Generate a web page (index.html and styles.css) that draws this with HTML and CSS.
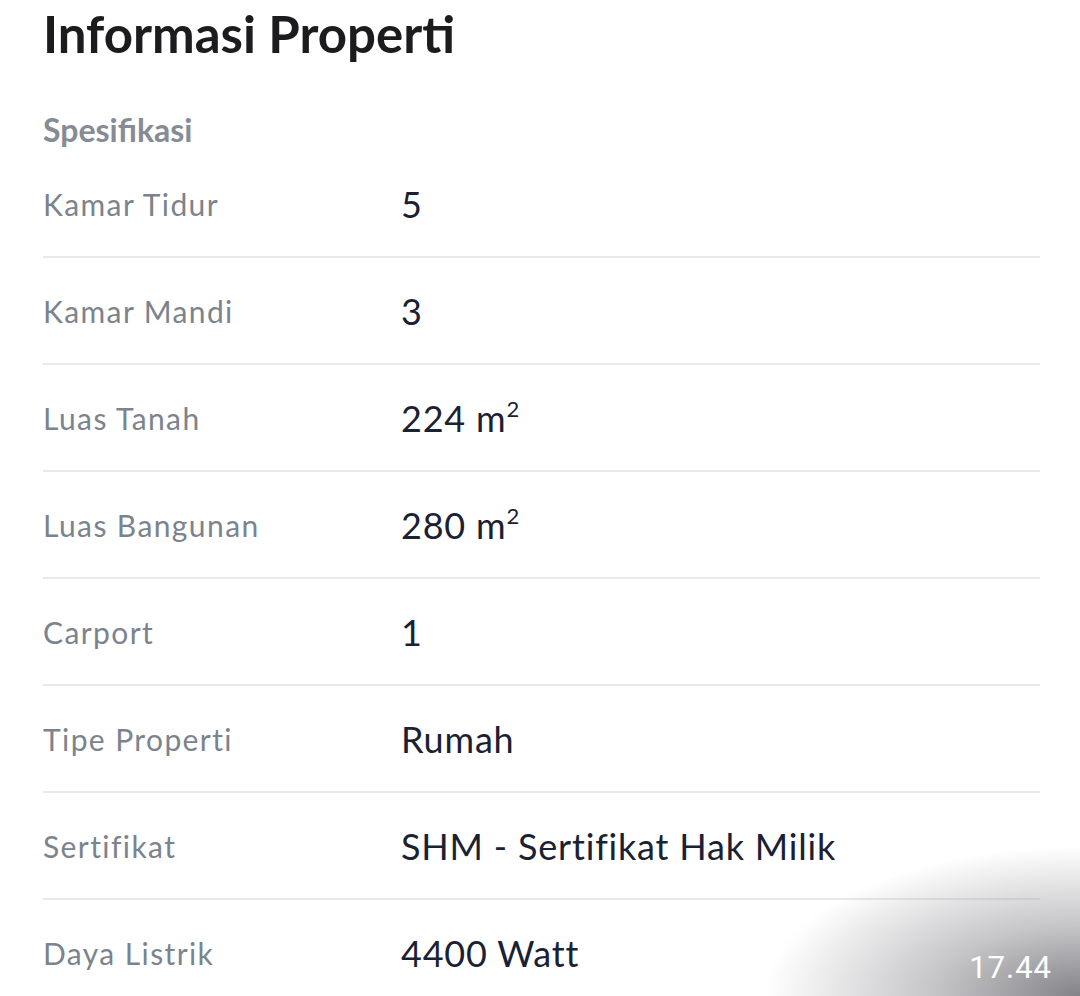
FILE: index.html
```html
<!DOCTYPE html>
<html lang="id">
    <head>
        <meta charset="UTF-8">
        <title>Informasi Properti</title>
        <link rel="stylesheet" href="styles.css">
    </head>
    <body>
        <div id="info">
            <h1 class="title">Informasi Properti</h1>
            <h2 class="subtitle">Spesifikasi</h2>
            <ul class="spec">
                <li><span class="label">Kamar Tidur</span><span class="value">5</span></li>
                <li><span class="label">Kamar Mandi</span><span class="value">3</span></li>
                <li><span class="label">Luas Tanah</span><span class="value">224 m<sup>2</sup></span></li>
                <li><span class="label">Luas Bangunan</span><span class="value">280 m<sup>2</sup></span></li>
                <li><span class="label">Carport</span><span class="value">1</span></li>
                <li><span class="label">Tipe Properti</span><span class="value">Rumah</span></li>
                <li><span class="label">Sertifikat</span><span class="value">SHM - Sertifikat Hak Milik</span></li>
                <li><span class="label">Daya Listrik</span><span class="value">4400 Watt</span></li>
            </ul>
        </div>
        <div class="shade"></div>
        <span class="time">17.44</span>
    </body>
</html>
```

FILE: styles.css
```css
*{
    margin: 0;
    padding: 0;
}
ul{
    list-style: none;
}
html,body{
    height: 100%;
    overflow: hidden;
}
body{
    background: #fff;
    font-family: Lato, "Noto Sans", sans-serif;
    position: relative;
}
#info{
    padding: 0 40px 0 43px;
}
.title{
    font-size: 51px;
    font-weight: 700;
    color: #1c1c1e;
    line-height: 68px;
}
.subtitle{
    margin-top: 41px;
    font-size: 32px;
    font-weight: 700;
    color: #868b94;
    line-height: 42px;
}
.spec li{
    display: flex;
    align-items: center;
    height: 105px;
    border-bottom: 2px solid #e9e9eb;
}
.spec .label{
    width: 358px;
    flex-shrink: 0;
    font-size: 30px;
    letter-spacing: 1.4px;
    color: #7b838d;
}
.spec .value{
    font-size: 36px;
    letter-spacing: 0.8px;
    color: #1a2133;
}
.spec sup{
    font-size: 22px;
    line-height: 0;
    vertical-align: 15px;
}
.shade{
    position: absolute;
    right: 0;
    bottom: 0;
    width: 420px;
    height: 200px;
    background: radial-gradient(ellipse 100% 100% at 100% 100%, rgba(110,110,115,.85) 0%, rgba(150,150,155,.55) 35%, rgba(255,255,255,0) 75%);
}
.time{
    position: absolute;
    right: 28px;
    bottom: 10px;
    font-family: Roboto, sans-serif;
    font-size: 31px;
    color: #fff;
    letter-spacing: 1px;
}
```
